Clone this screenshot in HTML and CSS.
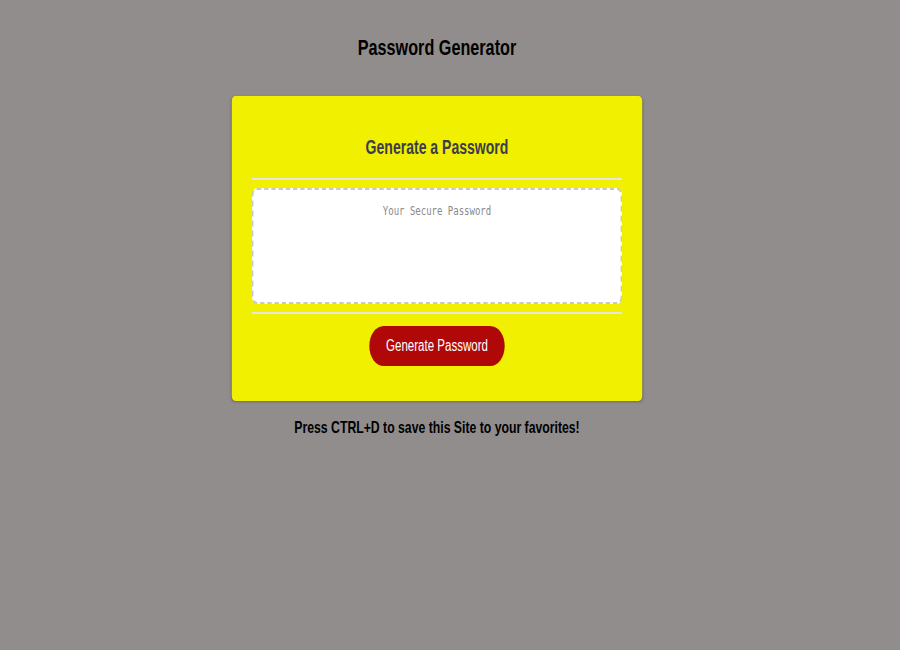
FILE: index.html
```html
<!DOCTYPE html>
<html lang="en">
<head>
<meta charset="utf-8">
<title>Password Generator</title>
<link rel="stylesheet" href="styles.css">
</head>
<body>
<div class="stage">
<div class="wrapper">
  <header class="page-header"><h1>Password Generator</h1></header>
  <div class="card">
    <div class="card-header"><h2>Generate a Password</h2></div>
    <div class="card-body">
      <textarea readonly class="password" placeholder="Your Secure Password" aria-label="Generated Password"></textarea>
    </div>
    <div class="card-footer">
      <button class="btn">Generate Password</button>
    </div>
  </div>
  <p class="note">Press CTRL+D to save this Site to your favorites!</p>
</div>
</div>
</body>
</html>
```

FILE: styles.css
```css
html, body {
  margin: 0;
  padding: 0;
  height: 100%;
}
body {
  background: #918d8c;
  font-family: "Liberation Sans", Arial, sans-serif;
  color: #000;
}
.stage {
  display: flex;
  justify-content: center;
  padding-right: 26px;
}
.wrapper {
  display: flex;
  flex-direction: column;
  align-items: center;
  padding-top: 34px;
  transform: scaleX(0.72);
  transform-origin: center top;
}
.page-header h1 {
  margin: 0;
  font-size: 22.5px;
  font-weight: bold;
  line-height: 28px;
}
.card {
  margin-top: 34px;
  width: 570px;
  box-sizing: border-box;
  background: #f0f000;
  border-radius: 5px;
  box-shadow: 0 1px 3px rgba(0,0,0,0.25);
  padding: 0 28px;
  display: flex;
  flex-direction: column;
}
.card-header {
  padding: 38px 0 18px;
  border-bottom: 2px solid #e6e6e6;
  text-align: center;
}
.card-header h2 {
  margin: 0;
  font-size: 19.5px;
  line-height: 26px;
  color: #3d3d4c;
}
.card-body {
  padding: 8px 0 8px;
  border-bottom: 2px solid #e6e6e6;
  display: flex;
}
.password {
  display: block;
  width: 100%;
  height: 116px;
  box-sizing: border-box;
  resize: none;
  border: 2px dashed #c8c8c8;
  border-radius: 7px;
  background: #fff;
  font-family: "DejaVu Sans Mono", "Liberation Mono", monospace;
  font-size: 12.5px;
  text-align: center;
  padding: 13px 12px;
  outline: none;
}
.password::placeholder {
  color: #8a8a8a;
}
.card-footer {
  display: flex;
  justify-content: center;
  padding: 12px 0 35px;
}
.btn {
  background: #b00808;
  color: #fff;
  border: none;
  border-radius: 20px;
  height: 40px;
  width: 188px;
  padding: 0;
  font-family: "Liberation Sans", Arial, sans-serif;
  font-size: 16px;
  cursor: pointer;
}
.note {
  margin: 17px 0 0;
  font-size: 17px;
  font-weight: bold;
  line-height: 20px;
}
```
